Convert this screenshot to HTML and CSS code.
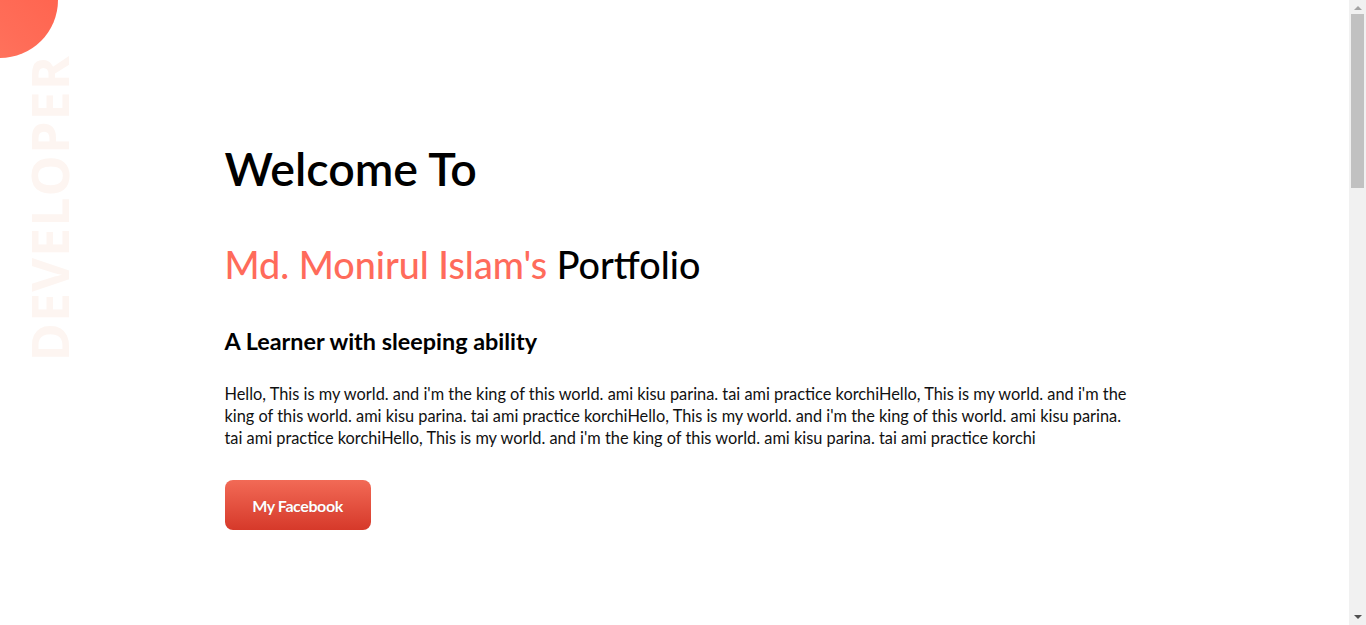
FILE: index.html
```html
<!DOCTYPE html>
<html lang="en">
<head>
<meta charset="utf-8">
<title>Portfolio</title>
<link rel="stylesheet" href="styles.css">
</head>
<body>
<div class="blob"></div>
<div class="side-word">DEVELOPER</div>
<main class="hero">
  <h1 class="hero-title">Welcome To</h1>
  <h2 class="hero-name"><span class="accent">Md. Monirul Islam's</span> Portfolio</h2>
  <h3 class="hero-tag">A Learner with sleeping ability</h3>
  <p class="hero-text">Hello, This is my world. and i'm the king of this world. ami kisu parina. tai ami practice korchiHello, This is my world. and i'm the king of this world. ami kisu parina. tai ami practice korchiHello, This is my world. and i'm the king of this world. ami kisu parina. tai ami practice korchiHello, This is my world. and i'm the king of this world. ami kisu parina. tai ami practice korchi</p>
  <a class="btn" href="#">My Facebook</a>
</main>
<section class="filler"></section>
<div class="scrollbar" aria-hidden="true">
  <span class="sb-arrow sb-up"></span>
  <span class="sb-thumb"></span>
  <span class="sb-arrow sb-down"></span>
</div>
</body>
</html>
```
FILE: styles.css
```css
html, body {
  margin: 0;
  padding: 0;
}
body {
  font-family: Lato, "Noto Sans", sans-serif;
  color: #000;
  background: #fff;
  position: relative;
  min-height: 2125px;
  padding-right: 17px;
}
.blob {
  position: absolute;
  top: -58px;
  left: -58px;
  width: 116px;
  height: 116px;
  border-radius: 50%;
  background: linear-gradient(225deg, #ff5f4a 0%, #ff6d58 60%, #ff7a62 100%);
}
.side-word {
  position: absolute;
  top: 55px;
  left: 27px;
  writing-mode: vertical-rl;
  transform: rotate(180deg);
  font-family: "Open Sans", sans-serif;
  font-weight: 700;
  font-size: 52px;
  line-height: 44px;
  letter-spacing: 1px;
  color: #fdf5f1;
}
.hero {
  width: 900px;
  margin: 0 auto;
  padding-top: 139px;
}
.hero-title {
  margin: 0;
  font-size: 46.5px;
  font-weight: 600;
  line-height: 58px;
}
.hero-name {
  margin: 45px 0 0;
  font-size: 37.7px;
  font-weight: 500;
  line-height: 46px;
}
.accent {
  color: #ff6b5b;
}
.hero-tag {
  margin: 38px 0 0;
  font-size: 23.4px;
  font-weight: 700;
  line-height: 30px;
}
.hero-text {
  margin: 27px -5px 0 0;
  font-size: 16.35px;
  line-height: 22px;
  color: #111;
}
.btn {
  display: inline-flex;
  align-items: center;
  justify-content: center;
  margin-top: 31px;
  width: 146px;
  height: 50px;
  border-radius: 8px;
  background: linear-gradient(180deg, #f26a56 0%, #d6392a 100%);
  color: #fff;
  font-weight: 700;
  font-size: 16px;
  text-decoration: none;
  letter-spacing: -0.4px;
  text-shadow: 0 0 1px rgba(0,0,0,0.2);
}
.filler {
  height: 1400px;
}
.scrollbar {
  position: fixed;
  top: 0;
  right: 0;
  width: 17px;
  height: 100vh;
  background: #f1f1f1;
  display: flex;
  flex-direction: column;
  align-items: center;
}
.sb-arrow {
  width: 0;
  height: 0;
  border-left: 4px solid transparent;
  border-right: 4px solid transparent;
}
.sb-up {
  margin-top: 6px;
  border-bottom: 4px solid #a3a3a3;
}
.sb-thumb {
  margin-top: 4px;
  width: 13px;
  height: 174px;
  background: #c1c1c1;
}
.sb-down {
  margin-top: auto;
  margin-bottom: 6px;
  border-top: 4px solid #505050;
}
```
